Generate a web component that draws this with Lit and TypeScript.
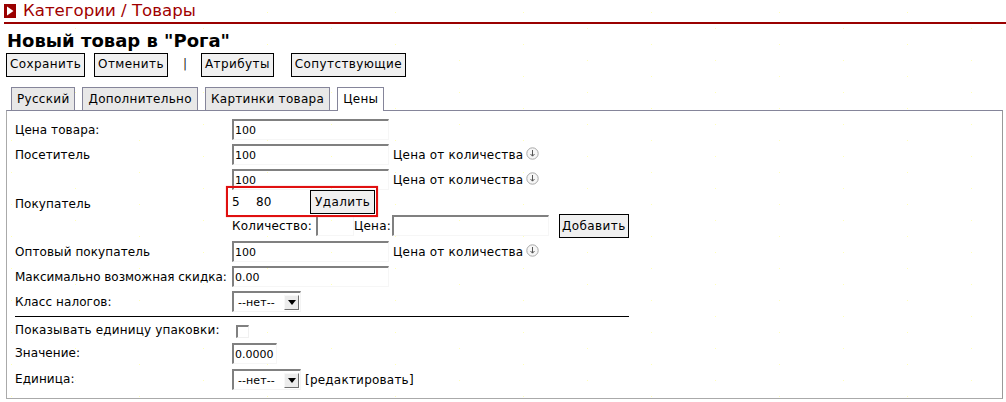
import { LitElement, html, css } from "lit";
import { customElement } from "lit/decorators.js";

const arrowIcon = html`<svg class="ci" width="13" height="13" viewBox="0 0 13 13"><circle cx="6.5" cy="6.5" r="5.7" fill="#f6f6f6" stroke="#a8a8a8"/><path d="M6.5 3v6M4.5 7l2 2.2 2-2.2" fill="none" stroke="#555"/></svg>`;

@customElement("app-root")
export class AppRoot extends LitElement {
  static styles = css`
    :host {
      display: block; width: 1006px; height: 402px; overflow: hidden; box-sizing: border-box;
      font: 12px/15px "DejaVu Sans", Verdana, sans-serif; letter-spacing: 0.08px; color: #000; background-color: #fff;
      background-image:
        radial-gradient(circle at 11.5px 12.5px, #ffffb8 0.8px, transparent 1px),
        radial-gradient(circle at 75.5px 28.5px, #ffffb8 0.8px, transparent 1px);
      background-size: 128px 32px;
    }
    .crumb { display: flex; align-items: center; gap: 7px; height: 22px; margin-left: 4px; border-bottom: 2px solid #9a0000; color: #a00000; font: 16.6px/22px "DejaVu Sans", sans-serif; letter-spacing: 0; }
    .crumb svg { display: block; }
    h1 { margin: 7px 0 0 7px; font: bold 18px/19px "DejaVu Sans", sans-serif; letter-spacing: 0; }
    .tools { display: flex; align-items: center; margin: 2px 0 0 6px; height: 25px; }
    button { font: 12px/15px "DejaVu Sans", sans-serif; letter-spacing: 0.4px; background: #f0f0f0; border: 1px solid #000; padding: 0 3px; height: 24px; color: #000; box-sizing: border-box; }
    .gap-a { margin-left: 9px; }
    .gap-b { margin-left: 17px; }
    .sep { margin: 0 14px 0 15px; color: #222; }
    .tabs { display: flex; gap: 7px; margin: 10px 0 0 11px; height: 23px; }
    .tab { display: flex; align-items: center; padding: 0 5px; letter-spacing: 0.3px; background: #e8e8e8; border: 1px solid #85859a; border-bottom: 0; box-sizing: border-box; height: 23px; }
    .tab.on { background: #fff; height: 24px; position: relative; z-index: 1; }
    .panel { box-sizing: border-box; margin: 0 3px 0 6px; height: 289px; border: 1px solid #aaa; border-top-color: #85859a; border-right-color: #999; padding: 8px 0 0 8px; }
    .form { width: 614px; }
    .row { display: flex; align-items: flex-start; height: 25px; }
    .row.tall { height: 26px; }
    .lab { width: 217px; flex: none; line-height: 23px; }
    .lab.tight { letter-spacing: -0.02px; }
    .in { box-sizing: border-box; display: block; width: 157px; height: 21px; padding: 0 0 0 1px; border: 2px solid #808080; border-right: 1px solid #f6f6f6; border-bottom: 1px solid #f6f6f6; font: 11px/18px "DejaVu Sans", sans-serif; background: transparent; color: #000; }
    .after { margin-left: 4px; display: flex; align-items: center; gap: 3px; line-height: 23px; letter-spacing: 0.22px; }
    .ci { display: block; margin-top: -5px; }
    .buyer { display: flex; align-items: center; }
    .buyer > .lab { margin-bottom: 2px; }
    .stack { display: flex; flex-direction: column; }
    .first { display: flex; align-items: flex-start; height: 16px; }
    .deal { box-sizing: border-box; display: flex; align-items: center; height: 30px; padding-top: 4px; position: relative; }
    .n1 { width: 24px; }
    .n2 { width: 54px; }
    .deal button { padding: 0 4px; }
    .deal::after { content: ""; position: absolute; box-sizing: border-box; left: -6px; top: 1px; width: 152px; height: 31px; border: 2px solid #e01010; box-shadow: 0 0 1px #f08080; pointer-events: none; }
    .add { display: flex; align-items: flex-start; height: 26px; line-height: 23px; }
    .qty { width: 84px; letter-spacing: 0.2px; }
    .cena { width: 36px; text-align: right; letter-spacing: 0.2px; }
    .add .in.q { width: 38px; }
    .add .in.p { width: 157px; margin-left: 2px; }
    .add button { margin: -1px 0 0 10px; padding: 0 2px; }
    .sel { box-sizing: border-box; width: 69px; height: 21px; display: flex; align-items: center; justify-content: space-between; border: 2px solid #808080; border-right: 1px solid #f4f4f4; border-bottom: 1px solid #f4f4f4; padding: 0 1px 0 4px; font: 11px/15px "DejaVu Sans", sans-serif; }
    .drop { box-sizing: border-box; width: 15px; height: 15px; background: #ececec; border: 1px solid; border-color: #f8f8f8 #707070 #707070 #f8f8f8; display: flex; align-items: center; justify-content: center; }
    .drop i { width: 0; height: 0; border: 4px solid transparent; border-top: 5px solid #000; border-bottom: 0; }
    hr { margin: 0; border: 0; border-top: 1px solid #000; height: 0; }
    .chk { box-sizing: border-box; display: block; width: 13px; height: 13px; margin: 8px 0 0 4px; border: 2px solid #808080; border-right: 1px solid #f0f0f0; border-bottom: 1px solid #f0f0f0; }
    .in.val { width: 45px; }
    .pack { line-height: 26px; letter-spacing: 0.15px; }
    .up { margin-top: -1px; }
  `;

  private price() {
    return html`<span class="after">Цена от количества ${arrowIcon}</span>`;
  }

  render() {
    return html`
      <div class="crumb">
        <svg width="12" height="14" viewBox="0 0 12 14"><rect width="12" height="14" fill="#9a0000"/><path d="M3 2.5 9.5 7 3 11.5z" fill="#fff"/></svg>
        <span>Категории / Товары</span>
      </div>
      <h1>Новый товар в "Рога"</h1>
      <div class="tools">
        <button>Сохранить</button>
        <button class="gap-a">Отменить</button>
        <span class="sep">|</span>
        <button>Атрибуты</button>
        <button class="gap-b">Сопутствующие</button>
      </div>
      <div class="tabs">
        <div class="tab">Русский</div>
        <div class="tab">Дополнительно</div>
        <div class="tab">Картинки товара</div>
        <div class="tab on">Цены</div>
      </div>
      <div class="panel">
        <div class="form">
          <div class="row"><span class="lab">Цена товара:</span><input class="in" value="100" /></div>
          <div class="row"><span class="lab">Посетитель</span><input class="in" value="100" />${this.price()}</div>
          <div class="buyer">
            <span class="lab">Покупатель</span>
            <div class="stack">
              <div class="first"><input class="in" value="100" />${this.price()}</div>
              <div class="deal"><span class="n1">5</span><span class="n2">80</span><button>Удалить</button></div>
              <div class="add"><span class="qty">Количество:</span><input class="in q" value="" /><span class="cena">Цена:</span><input class="in p" value="" /><button>Добавить</button></div>
            </div>
          </div>
          <div class="row"><span class="lab">Оптовый покупатель</span><input class="in" value="100" />${this.price()}</div>
          <div class="row"><span class="lab tight">Максимально возможная скидка:</span><input class="in" value="0.00" /></div>
          <div class="row"><span class="lab">Класс налогов:</span><div class="sel">--нет--<span class="drop"><i></i></span></div></div>
          <hr />
          <div class="row tall"><span class="lab pack">Показывать единицу упаковки:</span><span class="chk"></span></div>
          <div class="row tall"><span class="lab up">Значение:</span><input class="in val" value="0.0000" /></div>
          <div class="row"><span class="lab up">Единица:</span><div class="sel">--нет--<span class="drop"><i></i></span></div><span class="after">[редактировать]</span></div>
        </div>
      </div>
    `;
  }
}
